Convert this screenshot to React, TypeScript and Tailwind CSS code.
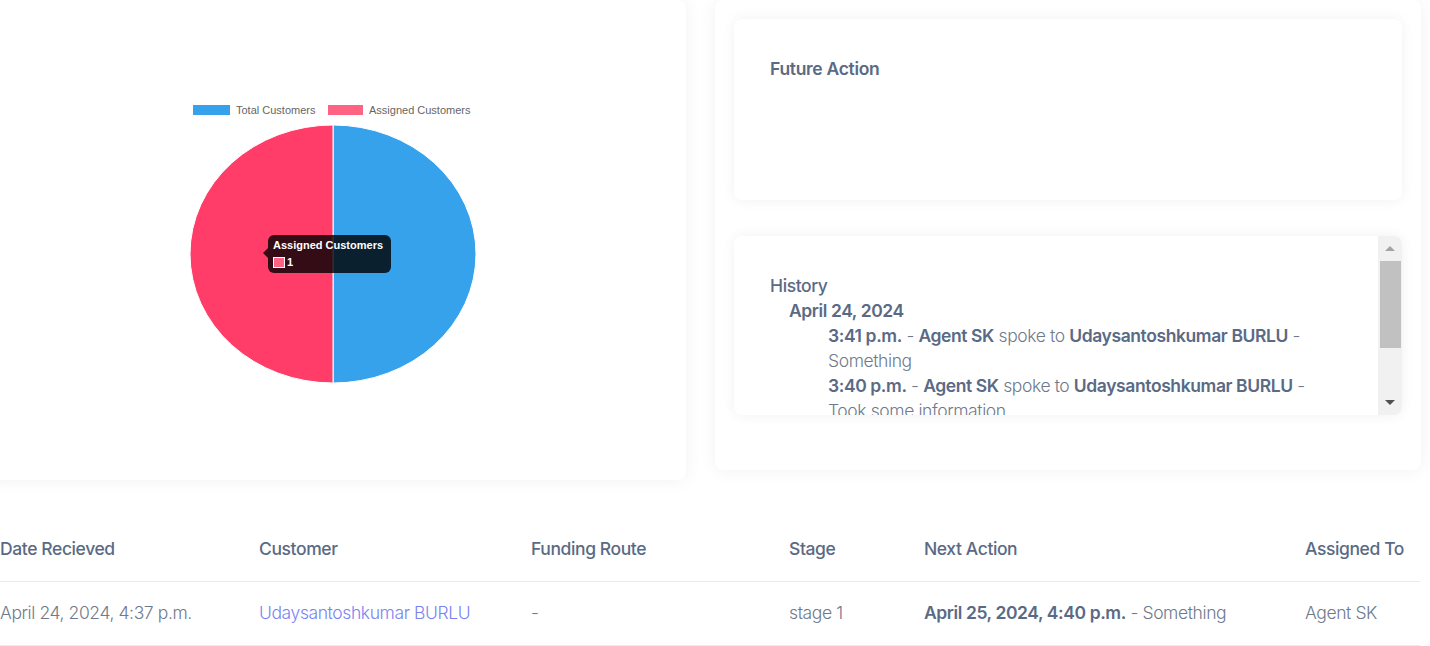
import React from 'react';

const rows = [
  {
    date: 'April 24, 2024, 4:37 p.m.',
    customer: 'Udaysantoshkumar BURLU',
    funding: '-',
    stage: 'stage 1',
    nextWhen: 'April 25, 2024, 4:40 p.m.',
    nextWhat: 'Something',
    assigned: 'Agent SK',
  },
];

const history = [
  { time: '3:41 p.m.', agent: 'Agent SK', customer: 'Udaysantoshkumar BURLU', note: 'Something' },
  { time: '3:40 p.m.', agent: 'Agent SK', customer: 'Udaysantoshkumar BURLU', note: 'Took some information' },
];

function PieChart() {
  // half ellipse centred on (333, 254) in page coords, card starts at -14
  const cx = 347;
  const cy = 254;
  const rx = 143;
  const ry = 129;
  return (
    <svg width="700" height="480" className="block">
      <rect x="207" y="105" width="37" height="10" fill="#36a2eb" />
      <text x="250" y="114" fontSize="11" fill="#666" fontFamily="'Liberation Sans', Arial, sans-serif">
        Total Customers
      </text>
      <rect x="342" y="105" width="35" height="10" fill="#ff6384" />
      <text x="383" y="114" fontSize="11" fill="#666" fontFamily="'Liberation Sans', Arial, sans-serif">
        Assigned Customers
      </text>
      <path
        d={`M ${cx} ${cy - ry} A ${rx} ${ry} 0 0 1 ${cx} ${cy + ry} Z`}
        fill="#36a2eb"
        stroke="#fff"
        strokeWidth="1"
      />
      <path
        d={`M ${cx} ${cy + ry} A ${rx} ${ry} 0 0 1 ${cx} ${cy - ry} Z`}
        fill="#ff3d68"
        stroke="#fff"
        strokeWidth="1"
      />
    </svg>
  );
}

export default function App() {
  return (
    <div className="min-h-screen bg-white text-[#5a6a85] overflow-hidden" style={{ fontFamily: 'Inter, "Noto Sans", sans-serif' }}>
      <div className="flex items-start gap-[29px]">
        <div className="relative -ml-[14px] w-[700px] h-[480px] shrink-0 bg-white rounded-lg shadow-[0_0_18px_rgba(0,0,0,0.06)]">
          <PieChart />
          <div className="absolute left-[282px] top-[235px] w-[123px] h-[38px] rounded-[6px] bg-black/80 px-[5px] pt-[4px] text-white" style={{ fontFamily: "'Liberation Sans', Arial, sans-serif" }}>
            <span className="absolute -left-[5px] top-[13px] w-0 h-0 border-y-[5px] border-y-transparent border-r-[5px] border-r-black/80" />
            <div className="text-[11px] font-bold leading-[13px]">Assigned Customers</div>
            <div className="flex items-center gap-[2px] mt-[4px] text-[11px] font-bold leading-[12px]">
              <span className="w-[12px] h-[11px] bg-[#ff6384] border border-white" />
              <span>1</span>
            </div>
          </div>
        </div>

        <div className="w-[706px] h-[470px] shrink-0 bg-white rounded-lg shadow-[0_0_18px_rgba(0,0,0,0.06)] p-[19px] flex flex-col gap-[36px]">
          <div className="h-[181px] rounded-lg bg-white shadow-[0_0_14px_rgba(0,0,0,0.06)] px-[36px] pt-[37px]">
            <h3 className="text-[17.5px] font-semibold leading-[26px] tracking-[-0.3px]">Future Action</h3>
          </div>

          <div className="h-[179px] rounded-lg bg-white shadow-[0_0_14px_rgba(0,0,0,0.06)] flex overflow-hidden">
            <div className="flex-1 overflow-hidden pl-[36px] pt-[37px] text-[17.5px] leading-[25px] tracking-[-0.4px]">
              <h3 className="font-medium">History</h3>
              <div className="pl-[19px]">
                <p className="font-semibold leading-[25px]">April 24, 2024</p>
                <div className="pl-[39px] w-[540px]">
                  {history.map((h) => (
                    <p key={h.time} className="text-[#6f7a8c] font-light">
                      <span className="font-semibold text-[#5a6a85]">{h.time}</span> -{' '}
                      <span className="font-semibold text-[#5a6a85]">{h.agent}</span> spoke to{' '}
                      <span className="font-semibold text-[#5a6a85]">{h.customer}</span> - {h.note}
                    </p>
                  ))}
                </div>
              </div>
            </div>
            <div className="w-[24px] shrink-0 bg-[#f1f1f1] flex flex-col items-center">
              <div className="h-[25px] flex items-center justify-center">
                <span className="w-0 h-0 border-x-[5px] border-x-transparent border-b-[5px] border-b-[#a3a3a3]" />
              </div>
              <div className="w-[21px] h-[87px] bg-[#c1c1c1]" />
              <div className="flex-1" />
              <div className="h-[25px] flex items-center justify-center">
                <span className="w-0 h-0 border-x-[5px] border-x-transparent border-t-[5px] border-t-[#505050]" />
              </div>
            </div>
          </div>
        </div>
      </div>

      <table className="mt-[37px] w-[1420px] table-fixed border-collapse text-[17.5px] tracking-[-0.4px]">
        <colgroup>
          <col className="w-[259px]" />
          <col className="w-[272px]" />
          <col className="w-[258px]" />
          <col className="w-[135px]" />
          <col className="w-[381px]" />
          <col className="w-[115px]" />
        </colgroup>
        <thead>
          <tr className="h-[64px] border-b border-[#e9ecef] text-left">
            <th className="font-medium">Date Recieved</th>
            <th className="font-medium">Customer</th>
            <th className="font-medium">Funding Route</th>
            <th className="font-medium">Stage</th>
            <th className="font-medium">Next Action</th>
            <th className="font-medium whitespace-nowrap">Assigned To</th>
          </tr>
        </thead>
        <tbody>
          {rows.map((r) => (
            <tr key={r.customer} className="h-[64px] border-b border-[#e9ecef] text-[#6f7a8c] font-light">
              <td>{r.date}</td>
              <td className="text-[#7a83f4]">{r.customer}</td>
              <td>{r.funding}</td>
              <td>{r.stage}</td>
              <td>
                <span className="font-semibold text-[#5a6a85]">{r.nextWhen}</span> - {r.nextWhat}
              </td>
              <td>{r.assigned}</td>
            </tr>
          ))}
        </tbody>
      </table>
    </div>
  );
}
